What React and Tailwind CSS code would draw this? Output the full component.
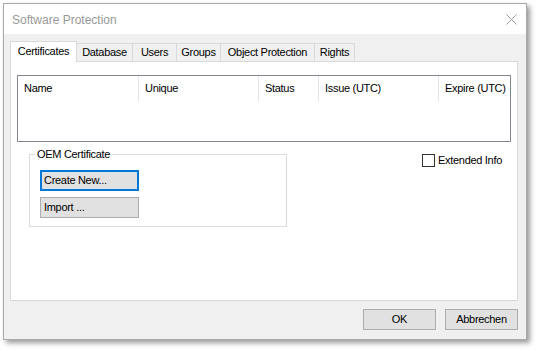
import React from "react";

const tabs = [
  { label: "Certificates", w: "w-[67px]", active: true },
  { label: "Database", w: "w-[56px]" },
  { label: "Users", w: "w-[44px]" },
  { label: "Groups", w: "w-[44px]" },
  { label: "Object Protection", w: "w-[94px]" },
  { label: "Rights", w: "w-[40px]" },
];

const columns = [
  { label: "Name", w: "w-[121px]" },
  { label: "Unique", w: "w-[120px]" },
  { label: "Status", w: "w-[60px]" },
  { label: "Issue (UTC)", w: "w-[120px]" },
  { label: "Expire (UTC)", w: "flex-1", last: true },
];

function WinButton({ children, className = "", focused = false }) {
  return (
    <button
      className={
        "flex items-center bg-[#e1e1e1] text-[11px] text-black leading-none tracking-[-0.3px] " +
        (focused
          ? "border-2 border-[#0078d7] "
          : "border border-[#adadad] ") +
        className
      }
    >
      {children}
    </button>
  );
}

export default function App() {
  return (
    <div
      className="w-[538px] h-[351px] bg-white pt-[3px] pl-[3px]"
      style={{ fontFamily: "'Liberation Sans', Arial, sans-serif" }}
    >
      <div className="w-[524px] h-[337px] border border-[#a9a9a9] flex flex-col shadow-[3px_3px_5px_rgba(0,0,0,0.4)]">
        {/* Title bar */}
        <div className="h-[30px] bg-white flex items-center justify-between pl-[8px] pr-[9px]">
          <span className="text-[12px] text-[#999999] pt-[1px]">
            Software Protection
          </span>
          <svg width="11" height="11" viewBox="0 0 11 11" className="mt-[1px]">
            <path d="M0.5 0.5 L10.5 10.5 M10.5 0.5 L0.5 10.5" stroke="#9a9a9a" strokeWidth="1" />
          </svg>
        </div>

        {/* Body */}
        <div className="flex-1 bg-[#f0f0f0] pt-[7px] pl-[6px] pr-[6px] flex flex-col tracking-[-0.3px]">
          {/* Tabs */}
          <div className="flex items-end h-[20px] relative z-10">
            {tabs.map((t) =>
              t.active ? (
                <div
                  key={t.label}
                  className={`${t.w} h-[21px] -mb-[1px] bg-white border border-b-0 border-[#d9d9d9] flex items-center justify-center text-[11px] text-black pb-[2px]`}
                >
                  {t.label}
                </div>
              ) : (
                <div
                  key={t.label}
                  className={`${t.w} h-[18px] bg-[#f0f0f0] border-t border-r border-[#d9d9d9] flex items-center justify-center text-[11px] text-black`}
                >
                  {t.label}
                </div>
              )
            )}
          </div>

          {/* Panel */}
          <div className="w-[508px] h-[240px] bg-white border border-[#d9d9d9] pt-[13px] pl-[6px]">
            {/* List view */}
            <div className="w-[494px] h-[67px] border border-[#828790] bg-white">
              <div className="flex h-[25px]">
                {columns.map((c) => (
                  <div
                    key={c.label}
                    className={`${c.w} flex items-center pl-[6px] text-[11px] text-black ${
                      c.last ? "" : "border-r border-[#e5e5e5]"
                    }`}
                  >
                    {c.label}
                  </div>
                ))}
              </div>
            </div>

            <div className="flex justify-between mt-[12px] pl-[12px] pr-[15px]">
              {/* Group box */}
              <div className="relative w-[258px] h-[73px] border border-[#dcdcdc] pt-[15px] pl-[10px]">
                <span className="absolute -top-[7px] left-[5px] bg-white px-[2px] text-[11px] text-black leading-[13px]">
                  OEM Certificate
                </span>
                <div className="flex flex-col gap-[6px]">
                  <WinButton focused className="w-[99px] h-[21px] pl-[2px]">
                    Create New...
                  </WinButton>
                  <WinButton className="w-[99px] h-[21px] pl-[3px]">
                    Import ...
                  </WinButton>
                </div>
              </div>

              {/* Checkbox */}
              <label className="flex items-start gap-[3px] text-[11px] text-black h-[14px]">
                <span className="w-[13px] h-[13px] border border-[#333333] bg-white"></span>
                <span className="leading-[13px]">Extended Info</span>
              </label>
            </div>
          </div>

          {/* Footer buttons */}
          <div className="flex justify-end gap-[9px] mt-[8px] pr-[2px]">
            <WinButton className="w-[73px] h-[21px] justify-center">OK</WinButton>
            <WinButton className="w-[73px] h-[21px] justify-center">
              Abbrechen
            </WinButton>
          </div>
        </div>
      </div>
    </div>
  );
}
